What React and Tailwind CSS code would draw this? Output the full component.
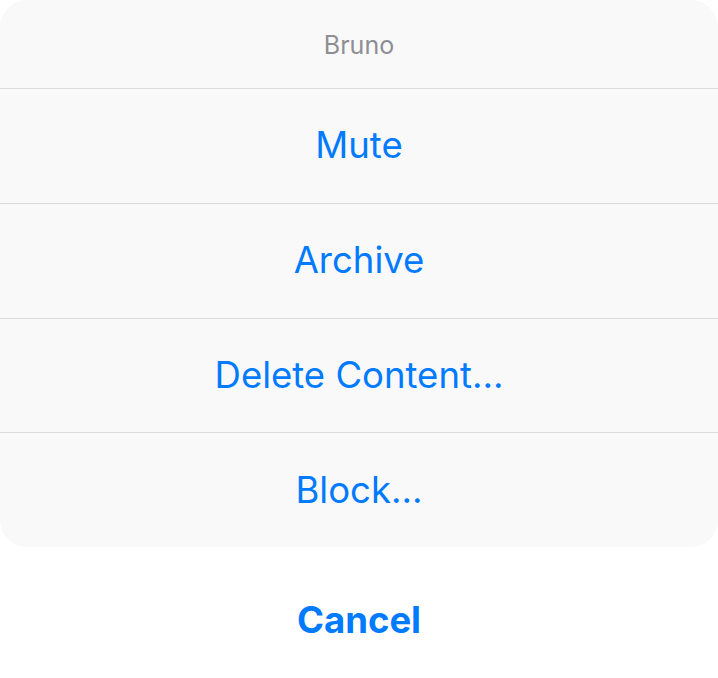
export default function App() {
  const actions = ["Mute", "Archive", "Delete Content…", "Block…"];

  return (
    <div className="w-[718px] h-[678px] bg-white flex flex-col font-['Inter',sans-serif]">
      <div className="bg-[#f9f9f9] rounded-[27px] overflow-hidden flex flex-col">
        <div className="h-[89px] pt-[3px] flex items-center justify-center text-[25px] text-[#8e8e93] border-b border-[#dbdbdb]">
          Bruno
        </div>
        {actions.map((label, i) => (
          <button
            key={label}
            className={
              "flex items-center justify-center text-[36.5px] text-[#007aff] " +
              (i < actions.length - 1 ? "h-[115px] border-b border-[#dbdbdb]" : "h-[114px]")
            }
          >
            {label}
          </button>
        ))}
      </div>
      <button className="mt-[16px] h-[115px] bg-white rounded-[27px] flex items-center justify-center text-[36.5px] font-bold text-[#007aff]">
        Cancel
      </button>
    </div>
  );
}
